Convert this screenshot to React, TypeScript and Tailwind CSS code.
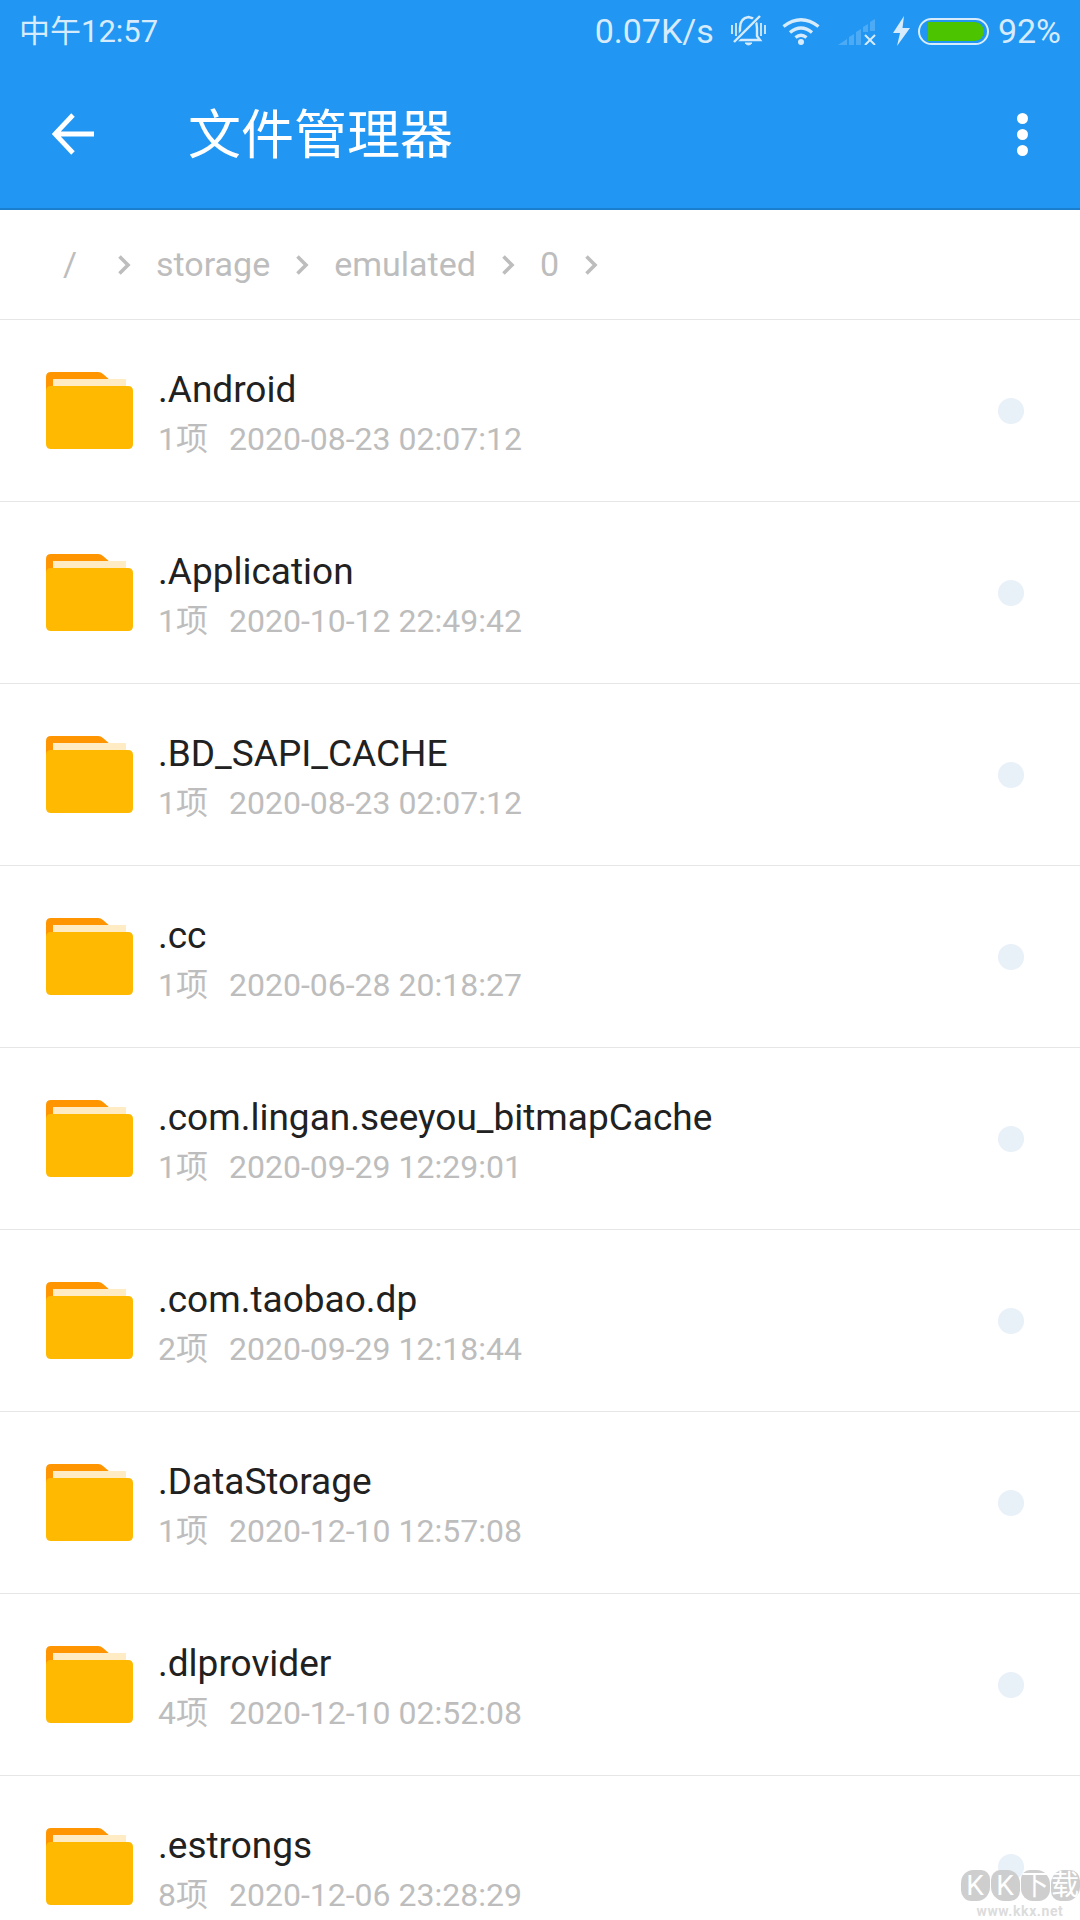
const files = [
  { name: ".Android", count: "1项", date: "2020-08-23 02:07:12" },
  { name: ".Application", count: "1项", date: "2020-10-12 22:49:42" },
  { name: ".BD_SAPI_CACHE", count: "1项", date: "2020-08-23 02:07:12" },
  { name: ".cc", count: "1项", date: "2020-06-28 20:18:27" },
  { name: ".com.lingan.seeyou_bitmapCache", count: "1项", date: "2020-09-29 12:29:01" },
  { name: ".com.taobao.dp", count: "2项", date: "2020-09-29 12:18:44" },
  { name: ".DataStorage", count: "1项", date: "2020-12-10 12:57:08" },
  { name: ".dlprovider", count: "4项", date: "2020-12-10 02:52:08" },
  { name: ".estrongs", count: "8项", date: "2020-12-06 23:28:29" },
];

const crumbs = ["storage", "emulated", "0"];

function Chevron() {
  return (
    <svg width="14" height="22" viewBox="0 0 14 22" className="shrink-0">
      <path d="M2.5 2.5 L11 11 L2.5 19.5" fill="none" stroke="#bdbdbd" strokeWidth="3.6" />
    </svg>
  );
}

function FolderIcon() {
  return (
    <svg width="87" height="77" viewBox="0 0 87 77" className="shrink-0">
      <path d="M5 0 H52 Q55 0 57 2 L65 9 V30 H0 V5 Q0 0 5 0 Z" fill="#ff9500" />
      <rect x="7" y="7" width="73" height="14" fill="#ffecc4" />
      <path d="M5 14 H82 Q87 14 87 19 V72 Q87 77 82 77 H5 Q0 77 0 72 V19 Q0 14 5 14 Z" fill="#ffb900" />
    </svg>
  );
}

function BellOff() {
  return (
    <svg width="35" height="32" viewBox="0 0 35 32" className="shrink-0" fill="none" stroke="#d6ebfb">
      <path d="M9 21 V13 Q9 3 17.5 2 Q26 3 26 13 V21 L29 25 H6 Z" strokeWidth="2.4" />
      <path d="M14 28 Q17.5 32 21 28 Z" fill="#d6ebfb" strokeWidth="1" />
      <path d="M28 1 L3 27" stroke="#2196f3" strokeWidth="5" />
      <path d="M29 1 L3 27" strokeWidth="2.4" />
      <path d="M1 10 V19 M5 8 V21 M30 8 V21 M34 10 V19" strokeWidth="1.8" />
    </svg>
  );
}

function Wifi() {
  return (
    <svg width="38" height="28" viewBox="0 0 38 28" className="shrink-0" fill="none" stroke="#d6ebfb" strokeWidth="3.4">
      <path d="M1.5 9.5 Q19 -4 36.5 9.5" />
      <path d="M8 15.5 Q19 6.5 30 15.5" />
      <path d="M13.5 20.5 Q19 16 24.5 20.5" />
      <circle cx="19" cy="25" r="3" fill="#d6ebfb" stroke="none" />
    </svg>
  );
}

function Signal() {
  return (
    <svg width="38" height="26" viewBox="0 0 38 26" className="shrink-0">
      <g fill="#ffffff" fillOpacity="0.2">
        <path d="M0 26 L9 20 V26 Z" />
        <path d="M11 18 L16 15 V26 H11 Z" />
        <path d="M18 13 L23 10 V26 H18 Z" />
        <path d="M25 8 L30 5 V13 H25 Z" />
        <path d="M32 3 L37 0 V12 H32 Z" />
      </g>
      <path d="M27 16 L37 26 M37 16 L27 26" stroke="#d6ebfb" strokeWidth="2" />
    </svg>
  );
}

function Bolt() {
  return (
    <svg width="17" height="30" viewBox="0 0 17 30" className="shrink-0">
      <path d="M11 0 L0 17 H7 L4 30 L17 12 H9.5 Z" fill="#d6ebfb" />
    </svg>
  );
}

function Battery() {
  return (
    <div className="w-[71px] h-[27px] shrink-0 rounded-full border-2 border-[#d6ebfb] p-[2px] pl-[8px] pr-[3px] flex">
      <div className="h-full w-full bg-[#4cc400] rounded-r-full" />
    </div>
  );
}

function StatusBar() {
  return (
    <div className="h-[60px] flex items-center pl-[19px] pr-[19px] pt-[2px] text-[#d6ebfb] leading-none">
      <span className="text-[31px]">中午12:57</span>
      <span className="ml-auto text-[34px]">0.07K/s</span>
      <div className="ml-[17px]"><BellOff /></div>
      <div className="ml-[16px]"><Wifi /></div>
      <div className="ml-[18px] mt-[2px]"><Signal /></div>
      <div className="ml-[17px]"><Bolt /></div>
      <div className="ml-[8px]"><Battery /></div>
      <span className="ml-[9px] text-[34px]">92%</span>
    </div>
  );
}

function Toolbar() {
  return (
    <div className="h-[150px] flex items-center pl-[52px] pr-[52px] border-b-2 border-[#1c7fce]">
      <svg width="42" height="42" viewBox="0 0 42 42" className="shrink-0">
        <path d="M21 2 L3 21 L21 40 M3 21 H42" fill="none" stroke="#ffffff" strokeWidth="4.8" />
      </svg>
      <h1 className="ml-[94px] pt-[4px] text-[53px] leading-none font-normal text-white">文件管理器</h1>
      <div className="ml-auto flex flex-col gap-[5px]">
        <span className="w-[11px] h-[11px] rounded-full bg-white" />
        <span className="w-[11px] h-[11px] rounded-full bg-white" />
        <span className="w-[11px] h-[11px] rounded-full bg-white" />
      </div>
    </div>
  );
}

function Breadcrumb() {
  return (
    <div className="h-[110px] flex items-center border-b border-[#e6e6e6] pl-[63px] text-[34px] text-[#bdbdbd]">
      <span className="w-[54px]">/</span>
      <Chevron />
      {crumbs.map((c) => (
        <div key={c} className="flex items-center">
          <span className="ml-[25px] mr-[25px]">{c}</span>
          <Chevron />
        </div>
      ))}
    </div>
  );
}

function FileRow({ name, count, date }: { name: string; count: string; date: string }) {
  return (
    <div className="h-[182px] flex items-center border-b border-[#e6e6e6] pl-[46px] pr-[56px]">
      <FolderIcon />
      <div className="ml-[25px] pt-[6px] flex flex-col">
        <span className="text-[37px] leading-[50px] text-[#212121]">{name}</span>
        <span className="text-[32px] leading-[48px] text-[#bdbdbd]">
          {count}
          <span className="ml-[21px]">{date}</span>
        </span>
      </div>
      <span className="ml-auto w-[26px] h-[26px] rounded-full bg-[#e8f0f8]" />
    </div>
  );
}

const stamps = [
  { text: "K", shape: "rounded-[42%_30%_45%_35%]" },
  { text: "K", shape: "rounded-[32%_44%_34%_46%]" },
  { text: "下", shape: "rounded-[30%_46%_38%_40%]" },
  { text: "载", shape: "rounded-[44%_34%_46%_32%]" },
];

function Watermark() {
  return (
    <div className="absolute right-[1px] bottom-[1px] w-[118px] flex flex-col items-center">
      <div className="flex gap-[1px]">
        {stamps.map((s, i) => (
          <span
            key={i}
            className={`w-[29px] h-[31px] ${s.shape} bg-[#c9c9c9]/90 text-white text-[28px] leading-[31px] text-center`}
          >
            {s.text}
          </span>
        ))}
      </div>
      <span className="mt-[2px] text-[14px] leading-[16px] font-bold tracking-[0.6px] text-[#dcdcdc]">www.kkx.net</span>
    </div>
  );
}

export default function App() {
  return (
    <div className="relative w-[1080px] h-[1920px] overflow-hidden bg-white font-['Roboto','Noto_Sans_CJK_SC',sans-serif]">
      <div className="bg-[#2196f3]">
        <StatusBar />
        <Toolbar />
      </div>
      <Breadcrumb />
      {files.map((f) => (
        <FileRow key={f.name} {...f} />
      ))}
      <Watermark />
    </div>
  );
}
